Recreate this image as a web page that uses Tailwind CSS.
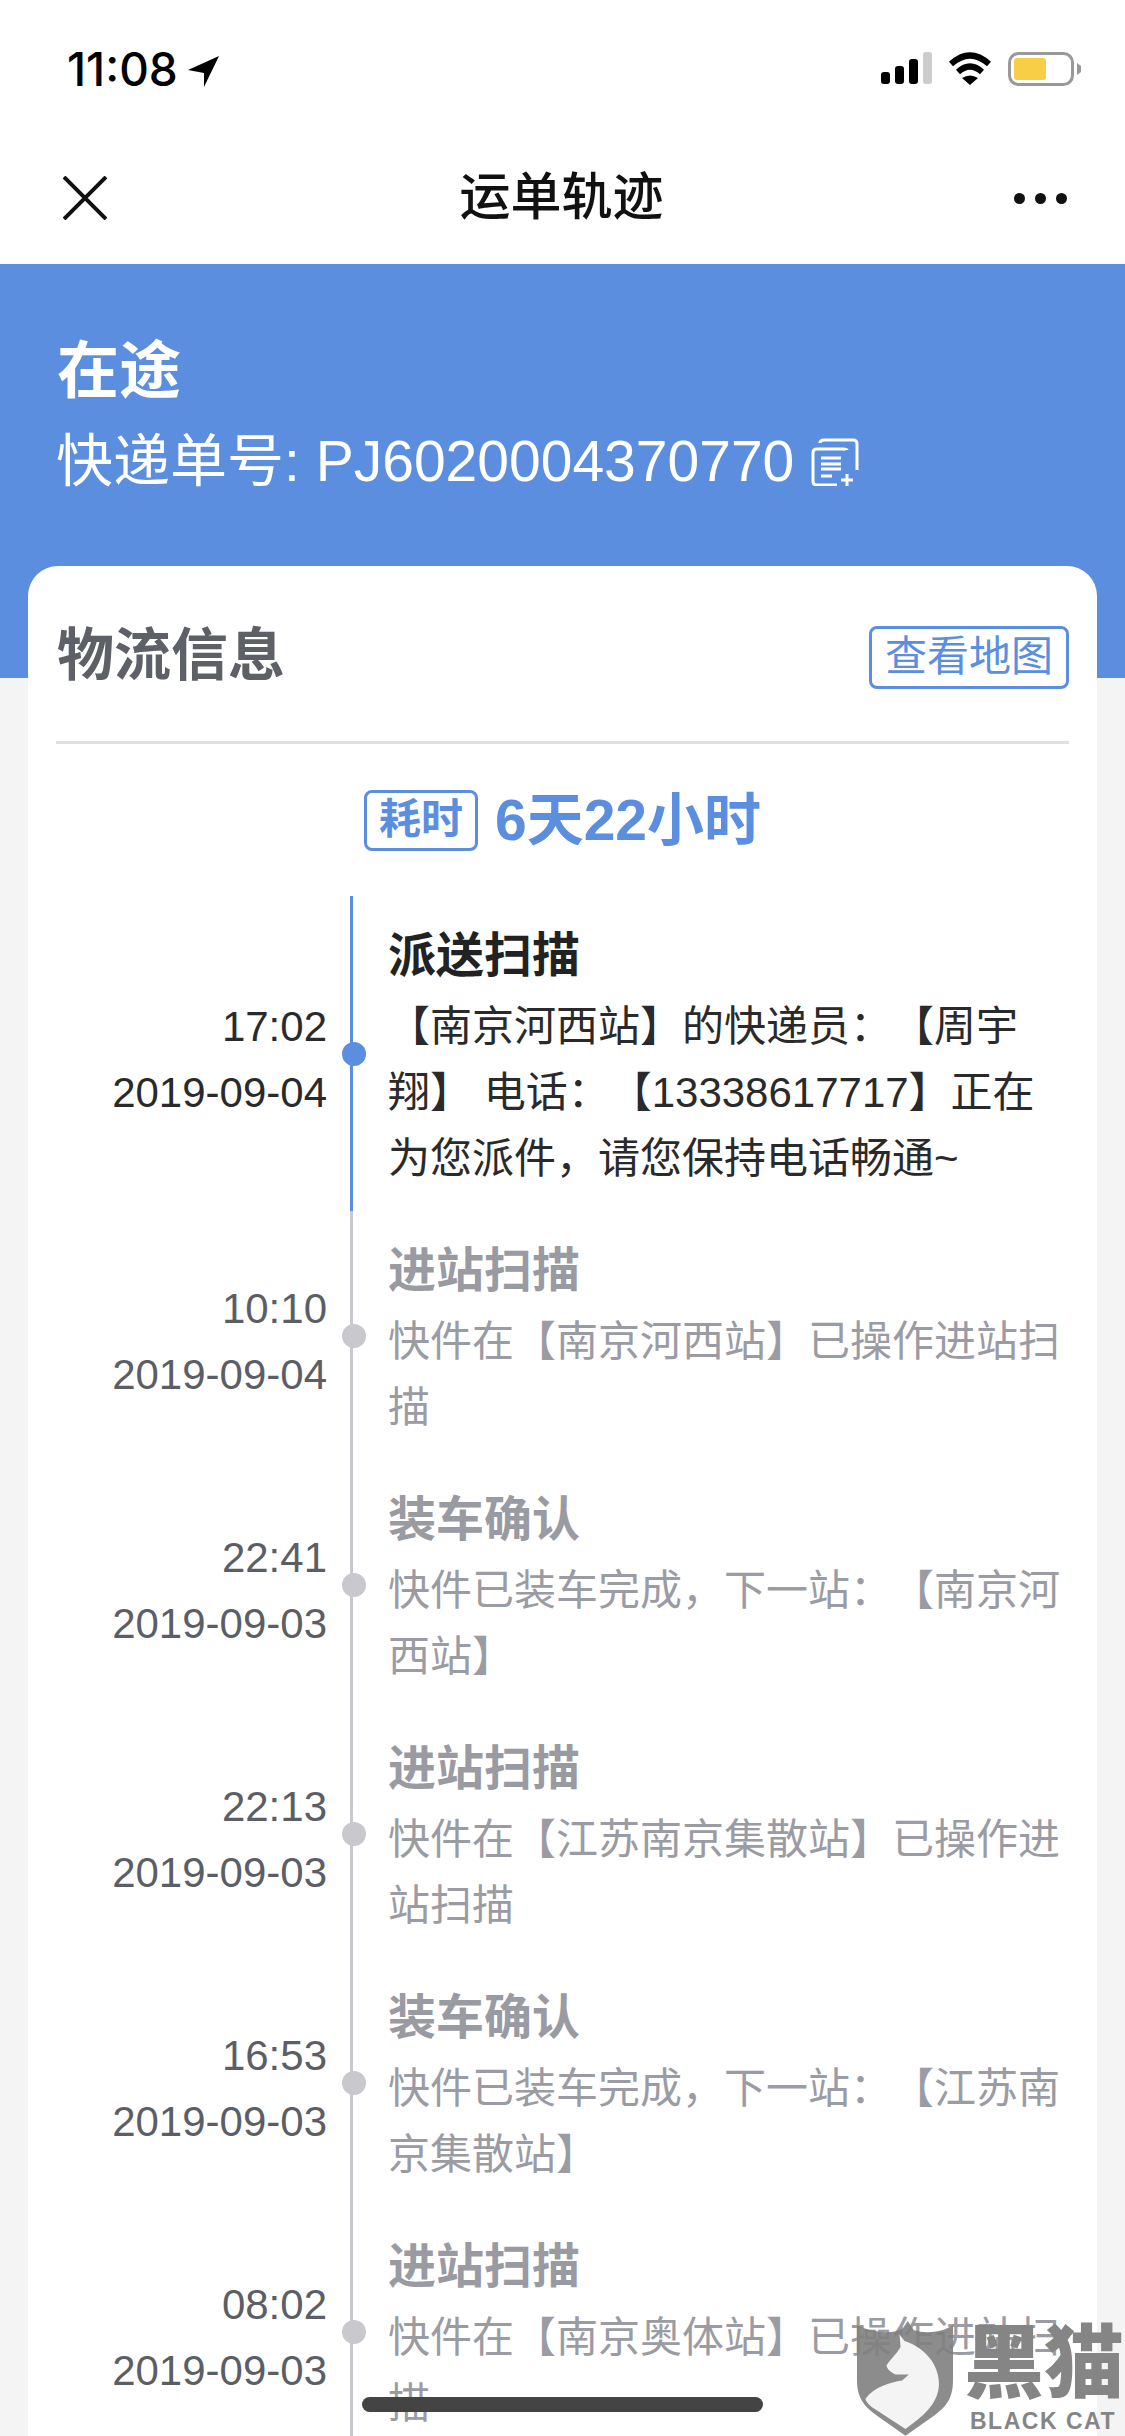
<!DOCTYPE html>
<html lang="zh">
<head>
  <meta charset="UTF-8" />
  <meta name="viewport" content="width=device-width, initial-scale=1.0" />
  <title>运单轨迹</title>
  <script src="https://cdn.jsdelivr.net/npm/@tailwindcss/browser@4"></script>
</head>
<body class="bg-[#f4f4f4]">
  <div class="relative w-[1125px] h-[2436px] overflow-hidden bg-[#f4f4f4] [text-spacing-trim:space-all] font-['Liberation_Sans','Noto_Sans_CJK_SC',sans-serif]">

    <!-- Status bar -->
    <div class="h-[132px] bg-white flex justify-between items-start pl-[67px] pr-[44px] pt-[52px]">
      <div class="flex items-start">
        <span class="font-['Inter',sans-serif] font-medium text-[46px] leading-[34px] text-black">11:08</span>
        <svg class="ml-[9px] mt-[4px]" width="32" height="32" viewBox="0 0 32 32"><path d="M32 0 L1 14 L17 17 L17 31 Z" fill="#000"/></svg>
      </div>
      <div class="flex items-start">
        <svg width="51" height="33" viewBox="0 0 51 33">
          <rect x="0" y="20" width="9" height="12" rx="3" fill="#000"/>
          <rect x="14" y="14" width="9" height="18" rx="3" fill="#000"/>
          <rect x="28" y="7" width="9" height="25" rx="3" fill="#000"/>
          <rect x="42" y="0" width="9" height="32" rx="3" fill="#cccccc"/>
        </svg>
        <svg class="ml-[16px]" width="44" height="34" viewBox="0 0 44 34">
          <path d="M3 12 Q22 -5 41 12" fill="none" stroke="#000" stroke-width="6"/>
          <path d="M10 20 Q22 9 34 20" fill="none" stroke="#000" stroke-width="6"/>
          <path d="M14 26 Q22 21 30 26 L22 33 Z" fill="#000"/>
        </svg>
        <svg class="ml-[16px]" width="73" height="34" viewBox="0 0 73 34">
          <rect x="1.5" y="1.5" width="63" height="31" rx="9" fill="#fff" stroke="#999999" stroke-width="3"/>
          <rect x="6" y="6" width="32" height="22" rx="3" fill="#f8ce46"/>
          <path d="M69 11 L73 14 L73 20 L69 23 Z" fill="#999999"/>
        </svg>
      </div>
    </div>

    <!-- Nav bar -->
    <div class="h-[132px] bg-white grid grid-cols-[1fr_auto_1fr] items-center pl-[56px] pr-[58px]">
      <svg class="ml-[7px]" width="44" height="44" viewBox="0 0 44 44"><path d="M1 1 L43 43 M43 1 L1 43" stroke="#111" stroke-width="4" fill="none"/></svg>
      <div class="text-[51px] leading-[60px] font-medium text-[#111]">运单轨迹</div>
      <div class="flex justify-end gap-[10px]">
        <span class="w-[11px] h-[11px] rounded-full bg-[#111]"></span>
        <span class="w-[11px] h-[11px] rounded-full bg-[#111]"></span>
        <span class="w-[11px] h-[11px] rounded-full bg-[#111]"></span>
      </div>
    </div>

    <!-- Blue header -->
    <div class="h-[414px] bg-[#5c8edf] pl-[57px] pt-[68px] text-white">
      <div class="text-[62px] leading-[80px] font-bold">在途</div>
      <div class="mt-[14px] flex items-center h-[70px]">
        <span class="text-[57px] leading-[70px] -ml-[1px]">快递单号: PJ6020004370770</span>
        <svg class="ml-[17px] mt-[2px]" width="48" height="48" viewBox="0 0 48 48" fill="none" stroke="#fff" stroke-width="3">
          <path d="M9 5 Q9 2 13 2 L42 2 Q46 2 46 6 L46 32"/>
          <path d="M36 12 Q36 11 32 11 L6 11 Q2 11 2 15 L2 43 Q2 47 6 47 L26 47"/>
          <path d="M10 20 H30 M10 26 H30 M10 31 H30 M10 38 H21"/>
          <path d="M30 42 H42 M36 36 V48"/>
        </svg>
      </div>
    </div>

    <!-- Card -->
    <div class="relative -mt-[112px] mx-[28px] px-[28px] bg-white rounded-t-[30px]">
      <div class="h-[178px] pt-[7px] flex items-center justify-between border-b-[3px] border-[#e0e0e0]">
        <div class="text-[57px] leading-[70px] font-bold text-[#5d6066] ml-[1px] -mt-[5px]">物流信息</div>
        <div class="w-[200px] h-[63px] flex items-center justify-center rounded-[8px] border-[3px] border-[#5c8edf] text-[42px] leading-[50px] text-[#5c8edf]">查看地图</div>
      </div>

      <div class="h-[152px] flex items-center justify-center gap-[17px]">
        <div class="w-[114px] h-[61px] flex items-center justify-center rounded-[8px] border-[3px] border-[#5c8edf] text-[42px] leading-[50px] font-bold text-[#5c8edf]">耗时</div>
        <div class="text-[57px] leading-[70px] font-bold text-[#5c8edf]">6天22小时</div>
      </div>

      <!-- Timeline -->
      <div>
        <div class="flex items-stretch">
          <div class="w-[271px] mr-[23px] pt-[13px] flex flex-col justify-center text-right text-[42px] leading-[66px] text-[#2a2a2a]">
            <div>17:02</div>
            <div>2019-09-04</div>
          </div>
          <div class="relative w-[719px] border-l-[3px] border-[#5c8edf] pl-[35px] pt-[22px] pb-[19px]">
            <span class="absolute left-[-11px] top-1/2 -translate-y-1/2 w-[24px] h-[24px] rounded-full bg-[#5c8edf]"></span>
            <div class="text-[48px] leading-[76px] font-bold text-[#222222]">派送扫描</div>
            <div class="text-[42px] leading-[66px] text-[#2a2a2a]">【南京河西站】的快递员：【周宇翔】 电话：【13338617717】正在为您派件，请您保持电话畅通~</div>
          </div>
        </div>

        <div class="flex items-stretch">
          <div class="w-[271px] mr-[23px] pt-[13px] flex flex-col justify-center text-right text-[42px] leading-[66px] text-[#5c5e66]">
            <div>10:10</div>
            <div>2019-09-04</div>
          </div>
          <div class="relative w-[719px] border-l-[3px] border-[#c8c8ce] pl-[35px] pt-[22px] pb-[19px]">
            <span class="absolute left-[-11px] top-1/2 -translate-y-1/2 w-[24px] h-[24px] rounded-full bg-[#c8c8ce]"></span>
            <div class="text-[48px] leading-[76px] font-bold text-[#9a9aa2]">进站扫描</div>
            <div class="text-[42px] leading-[66px] text-[#9b9ba3]">快件在【南京河西站】已操作进站扫描</div>
          </div>
        </div>

        <div class="flex items-stretch">
          <div class="w-[271px] mr-[23px] pt-[13px] flex flex-col justify-center text-right text-[42px] leading-[66px] text-[#5c5e66]">
            <div>22:41</div>
            <div>2019-09-03</div>
          </div>
          <div class="relative w-[719px] border-l-[3px] border-[#c8c8ce] pl-[35px] pt-[22px] pb-[19px]">
            <span class="absolute left-[-11px] top-1/2 -translate-y-1/2 w-[24px] h-[24px] rounded-full bg-[#c8c8ce]"></span>
            <div class="text-[48px] leading-[76px] font-bold text-[#9a9aa2]">装车确认</div>
            <div class="text-[42px] leading-[66px] text-[#9b9ba3]">快件已装车完成，下一站：【南京河西站】</div>
          </div>
        </div>

        <div class="flex items-stretch">
          <div class="w-[271px] mr-[23px] pt-[13px] flex flex-col justify-center text-right text-[42px] leading-[66px] text-[#5c5e66]">
            <div>22:13</div>
            <div>2019-09-03</div>
          </div>
          <div class="relative w-[719px] border-l-[3px] border-[#c8c8ce] pl-[35px] pt-[22px] pb-[19px]">
            <span class="absolute left-[-11px] top-1/2 -translate-y-1/2 w-[24px] h-[24px] rounded-full bg-[#c8c8ce]"></span>
            <div class="text-[48px] leading-[76px] font-bold text-[#9a9aa2]">进站扫描</div>
            <div class="text-[42px] leading-[66px] text-[#9b9ba3]">快件在【江苏南京集散站】已操作进站扫描</div>
          </div>
        </div>

        <div class="flex items-stretch">
          <div class="w-[271px] mr-[23px] pt-[13px] flex flex-col justify-center text-right text-[42px] leading-[66px] text-[#5c5e66]">
            <div>16:53</div>
            <div>2019-09-03</div>
          </div>
          <div class="relative w-[719px] border-l-[3px] border-[#c8c8ce] pl-[35px] pt-[22px] pb-[19px]">
            <span class="absolute left-[-11px] top-1/2 -translate-y-1/2 w-[24px] h-[24px] rounded-full bg-[#c8c8ce]"></span>
            <div class="text-[48px] leading-[76px] font-bold text-[#9a9aa2]">装车确认</div>
            <div class="text-[42px] leading-[66px] text-[#9b9ba3]">快件已装车完成，下一站：【江苏南京集散站】</div>
          </div>
        </div>

        <div class="flex items-stretch">
          <div class="w-[271px] mr-[23px] pt-[13px] flex flex-col justify-center text-right text-[42px] leading-[66px] text-[#5c5e66]">
            <div>08:02</div>
            <div>2019-09-03</div>
          </div>
          <div class="relative w-[719px] border-l-[3px] border-[#c8c8ce] pl-[35px] pt-[22px] pb-[19px]">
            <span class="absolute left-[-11px] top-1/2 -translate-y-1/2 w-[24px] h-[24px] rounded-full bg-[#c8c8ce]"></span>
            <div class="text-[48px] leading-[76px] font-bold text-[#9a9aa2]">进站扫描</div>
            <div class="text-[42px] leading-[66px] text-[#9b9ba3]">快件在【南京奥体站】已操作进站扫描</div>
          </div>
        </div>
      </div>
    </div>

    <!-- Home indicator -->
    <div class="absolute left-[362px] top-[2397px] w-[401px] h-[15px] rounded-full bg-[#444444]"></div>

    <!-- Watermark -->
    <div class="absolute left-[857px] top-[2320px] flex items-start">
      <svg width="97" height="116" viewBox="470 510 290 345">
        <path d="M470 525 C520 548 575 552 606 535 L622 512 L640 540 C680 552 725 545 757 525 L757 690 C757 745 735 770 700 795 L615 855 L530 795 C495 770 470 745 470 690 Z" fill="#808080" fill-opacity="0.9"/>
        <path d="M597 552 L612 572 C670 590 715 640 715 700 C715 750 680 790 615 835 L515 770 C505 762 497 752 495 745 C520 710 570 695 605 690 L625 672 L585 672 C570 665 560 655 558 645 C575 620 590 610 600 590 Z" fill="#ffffff" fill-opacity="0.9"/>
      </svg>
      <div class="ml-[10px] w-[158px] flex flex-col items-stretch text-[#858585]">
        <div class="text-[80px] leading-[88px] font-black whitespace-nowrap">黑猫</div>
        <div class="text-[23px] leading-[26px] font-bold tracking-[1.5px] ml-[6px] whitespace-nowrap font-['Liberation_Sans',sans-serif]">BLACK CAT</div>
      </div>
    </div>
  </div>
</body>
</html>
